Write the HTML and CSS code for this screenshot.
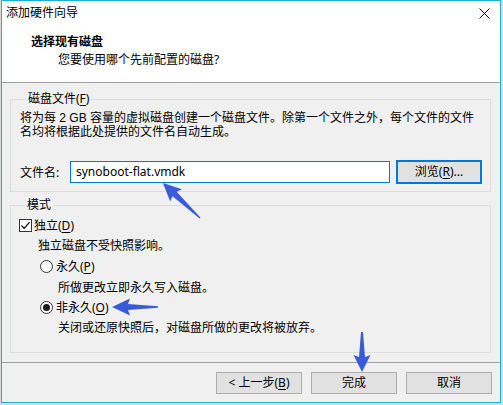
FILE: index.html
```html
<!DOCTYPE html>
<html>
<head>
<meta charset="utf-8" />
<title>添加硬件向导</title>
<link rel="stylesheet" href="styles.css">
</head>
<body>
<div class="window">
  <div class="titlebar">
    <span class="title">添加硬件向导</span>
    <svg class="close" width="11" height="11" viewBox="0 0 11 11"><path d="M0.5 0.5L10.5 10.5M10.5 0.5L0.5 10.5" stroke="#000" stroke-width="1"/></svg>
  </div>
  <div class="header">
    <div class="h-title">选择现有磁盘</div>
    <div class="h-sub">您要使用哪个先前配置的磁盘?</div>
  </div>
  <div class="content">
    <fieldset class="group group-file">
      <legend>磁盘文件(<u>F</u>)</legend>
      <p class="desc">将为每 2 GB 容量的虚拟磁盘创建一个磁盘文件。除第一个文件之外，每个文件的文件<br />名均将根据此处提供的文件名自动生成。</p>
      <div class="file-row">
        <span class="label">文件名:</span>
        <div class="input">synoboot-flat.vmdk</div>
        <div class="btn btn-browse">浏览(<u>R</u>)...</div>
      </div>
    </fieldset>
    <fieldset class="group group-mode">
      <legend>模式</legend>
      <div class="row row-check">
        <span class="checkbox"><svg width="11" height="11" viewBox="0 0 11 11"><path d="M1.5 5.5L4.2 8.3L9.6 2.2" fill="none" stroke="#000" stroke-width="1.2"/></svg></span>独立(<u>D</u>)
      </div>
      <div class="row note note-check">独立磁盘不受快照影响。</div>
      <div class="row row-radio first"><span class="radio"></span>永久(<u>P</u>)</div>
      <div class="row note note-radio">所做更改立即永久写入磁盘。</div>
      <div class="row row-radio"><span class="radio on"></span>非永久(<u>O</u>)</div>
      <div class="row note note-radio">关闭或还原快照后，对磁盘所做的更改将被放弃。</div>
    </fieldset>
  </div>
  <div class="footer">
    <div class="btn">&lt; 上一步(<u>B</u>)</div>
    <div class="btn">完成</div>
    <div class="btn">取消</div>
  </div>
</div>

<!-- 标注箭头 -->
<svg class="arrows" width="503" height="405" viewBox="0 0 503 405">
  <g fill="#3a5bd9">
    <polygon transform="translate(200,218) rotate(-136.6)" points="0,-0.6 35,-3 33,-8.5 51,0 33,8.5 35,3 0,0.6" />
    <polygon transform="translate(158,307) rotate(180)" points="0,-0.8 30,-3 28,-8.5 46,0 28,8.5 30,3 0,0.8" />
    <polygon transform="translate(362,332) rotate(90)" points="0,-1 25,-3 23,-8.5 40,0 23,8.5 25,3 0,1" />
  </g>
</svg>
</body>
</html>
```

FILE: styles.css
```css
*{ padding:0; margin:0; box-sizing:border-box;}
body{
  position:relative;
  width:503px;
  height:405px;
  overflow:hidden;
  background:#d9d9d9;
  font-family:"Noto Sans","Noto Sans CJK SC",sans-serif;
  font-size:12px;
  color:#000;
}
u{ text-decoration:underline; text-underline-offset:2px;}
.window{
  width:500px;
  height:403px;
  margin-left:1px;
  border:1px solid #1bb0d0;
  background:#f0f0f0;
  display:flex;
  flex-direction:column;
}
.titlebar{
  height:24px;
  background:#fff;
  display:flex;
  align-items:center;
  justify-content:space-between;
  padding:0 10px 0 4px;
  line-height:24px;
}
.close{ display:block; margin-top:1px;}
.header{
  height:58px;
  background:#fff;
  border-bottom:1px solid #a0a0a0;
  padding:9px 0 0 29px;
}
.h-title{ font-weight:bold; line-height:16px;}
.h-sub{ line-height:16px; margin:2px 0 0 27px;}

.content{ padding:0 9px 0 8px;}
.group{
  border:1px solid #dcdcdc;
  min-width:0;
}
.group legend{
  line-height:16px;
  padding:0 2px;
  margin-left:6px;
}
.group-file{ margin-top:8px; padding:4px 8px 7px 9px;}
/* 两行说明文字行距很紧 */
.desc{ line-height:14px; font-family:"Liberation Sans","Noto Sans CJK SC",sans-serif;}
.file-row{
  display:flex;
  align-items:center;
  margin-top:21px;
  height:24px;
}
.label{ width:50px; flex:none;}
.input{
  width:320px;
  height:22px;
  border:1px solid #0078d7;
  background:#fff;
  padding-left:5px;
  line-height:20px;
}
.btn{
  width:86px;
  height:22px;
  border:1px solid #adadad;
  background:#e1e1e1;
  text-align:center;
  line-height:20px;
}
.btn-browse{ height:24px; margin-left:auto; border:2px solid #0078d7; line-height:20px;}

.group-mode{ margin-top:5px; padding:2px 8px 15px 8px;}
.row{ display:flex; align-items:center; height:20px;}
.row-radio.first{ height:22px;}
.note-check{ padding-left:19px;}
.row-radio{ padding-left:21px;}
.note-radio{ padding-left:39px;}
.checkbox{
  width:13px; height:13px;
  border:1px solid #333;
  background:#fff;
  margin-right:2px;
  display:flex;
  align-items:center;
  justify-content:center;
}
.checkbox svg{ display:block;}
.radio{
  width:13px; height:13px;
  border:1px solid #333;
  border-radius:50%;
  background:#fff;
  margin-right:3px;
  display:flex;
  align-items:center;
  justify-content:center;
}
.radio.on::after{
  content:"";
  width:7px; height:7px;
  border-radius:50%;
  background:#1a1a1a;
}

.footer{
  margin-top:auto;
  border-top:1px solid #a0a0a0;
  padding:9px 8px 8px 0;
  display:flex;
  justify-content:flex-end;
  gap:9px;
}
.arrows{ position:absolute; left:0; top:0; pointer-events:none;}
```
